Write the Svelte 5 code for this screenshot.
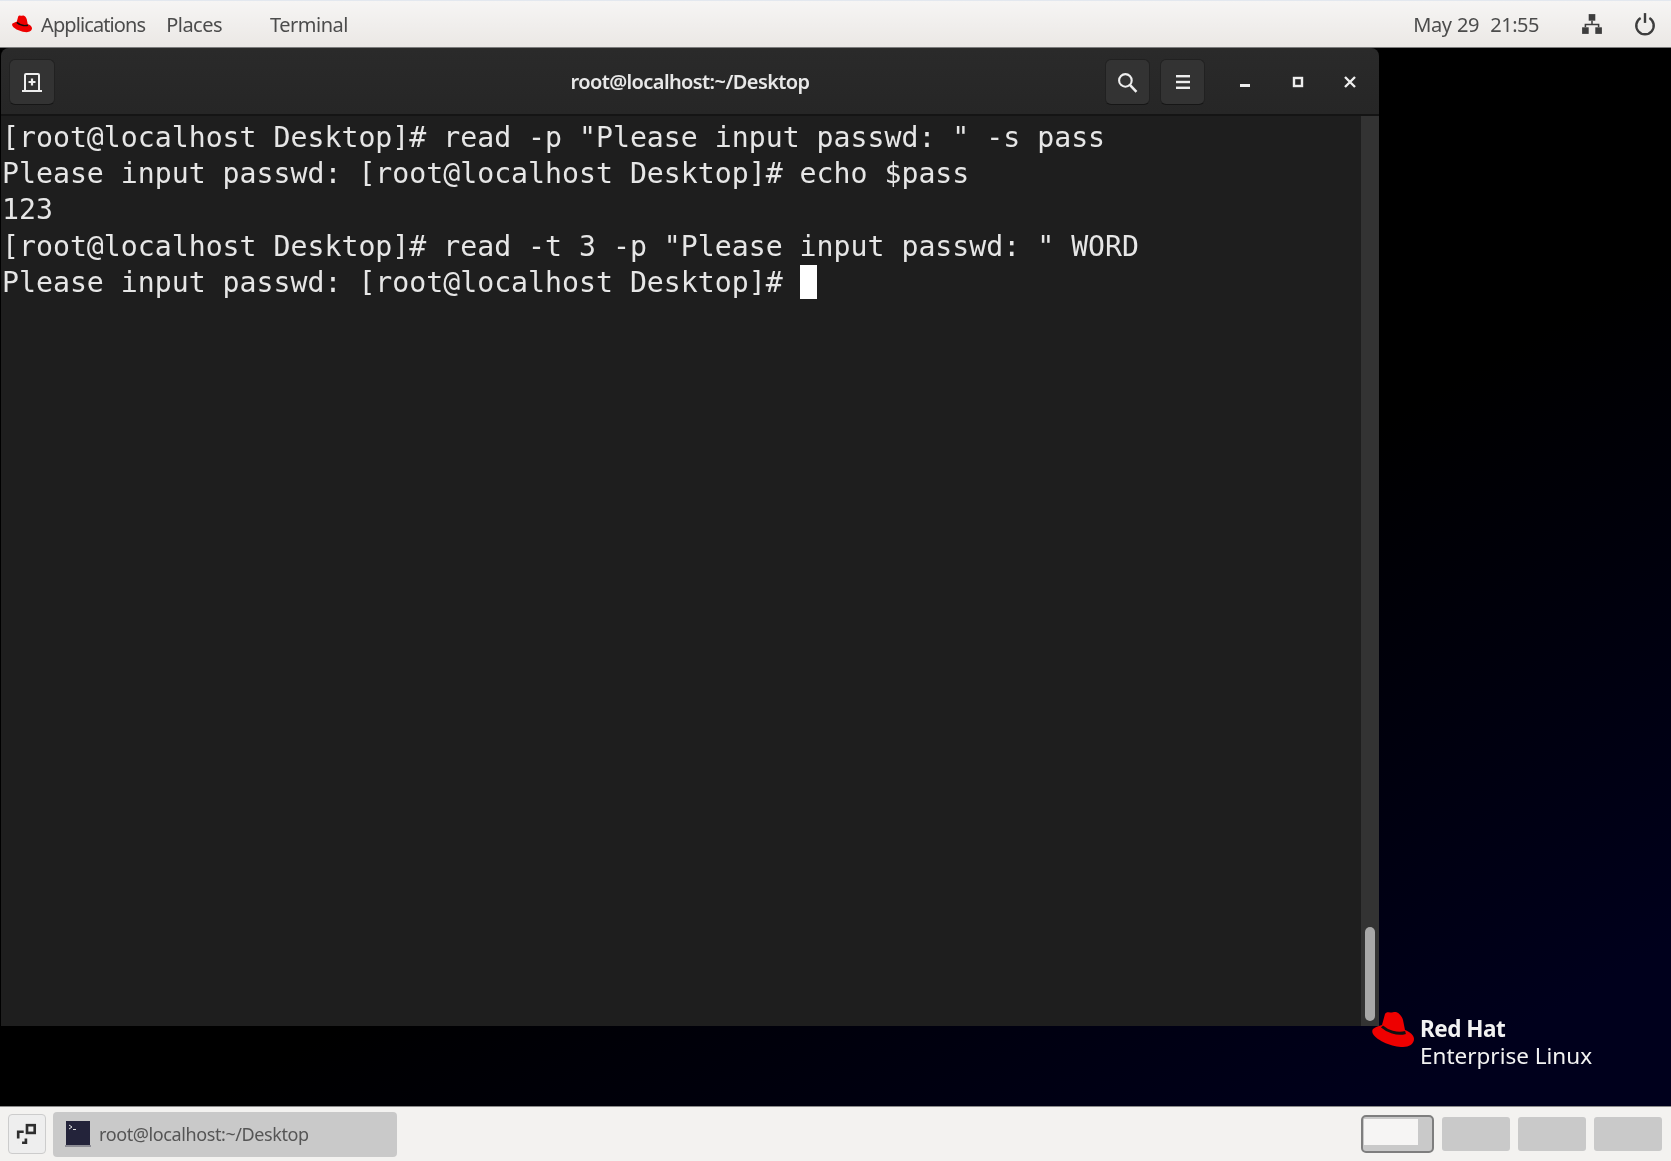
<script>
  const lines = [
    '[root@localhost Desktop]# read -p "Please input passwd: " -s pass',
    'Please input passwd: [root@localhost Desktop]# echo $pass',
    '123',
    '[root@localhost Desktop]# read -t 3 -p "Please input passwd: " WORD'
  ]
  const prompt = 'Please input passwd: [root@localhost Desktop]# '
  const workspaces = [true, false, false, false]
</script>

{#snippet hat(size)}
  <svg width={size} height={size * 36 / 42} viewBox="0 0 42 36" class="hat">
    <path fill="#e00" d="M13 3C14 1 16 1 18 1.500 20 2 22 .5 24 1 27 2 30 5 31 9L33 19C38 21 42 24 42 28 42 33 37 36 31 36 21 36 5 30 1 23 0 21 0 19 1 18 4 15.500 7 15 10 14Z"/>
    <path fill="none" stroke="#111" stroke-width="3" d="M10 15.500C15 20 25 24 33.500 21.500"/>
  </svg>
{/snippet}

<div class="screen">
  <header class="topbar">
    <div class="menus">
      <span class="apps">{@render hat(20)} <span class="apps-label">Applications</span></span>
      <span class="places">Places</span>
      <span class="app-name">Terminal</span>
    </div>
    <div class="status">
      <span class="clock">May 29&nbsp; 21:55</span>
      <svg class="net" width="22" height="22" viewBox="0 0 20 20" fill="#3d3d3d">
        <rect x="7" y="1" width="6" height="6"/>
        <rect x="1" y="13" width="6" height="6"/>
        <rect x="13" y="13" width="6" height="6"/>
        <path d="M9.300 7h1.400v2.800H16.700V13h-1.400v-1.800H4.700V13H3.300V9.800h6z"/>
      </svg>
      <svg class="power" width="22" height="24" viewBox="0 0 20 22" fill="none" stroke="#3d3d3d" stroke-width="2.200">
        <path d="M6 5.500a8 8 0 1 0 8 0"/>
        <path d="M10 1v9"/>
      </svg>
    </div>
  </header>

  <main class="desktop">
    <section class="window">
      <div class="titlebar">
        <button class="btn new-tab" aria-label="New tab">
          <svg width="22" height="22" viewBox="0 0 22 22" fill="none" stroke="#eee" stroke-width="2">
            <path d="M4 19V4a1 1 0 0 1 1-1h12a1 1 0 0 1 1 1v15"/>
            <path d="M1 20h20"/>
            <path d="M11 7.500v7M7.500 11h7" stroke-width="2.200"/>
          </svg>
        </button>
        <span class="title">root@localhost:~/Desktop</span>
        <div class="actions">
          <button class="btn search" aria-label="Search">
            <svg width="21" height="21" viewBox="0 0 20 20" fill="none" stroke="#eee" stroke-width="2">
              <circle cx="8" cy="8" r="6"/>
              <path d="M12.500 12.500 18.500 19" stroke-width="2.400"/>
            </svg>
          </button>
          <button class="btn menu" aria-label="Menu">
            <svg width="14" height="16" viewBox="0 0 14 16" fill="#eee">
              <rect y="1" width="14" height="2.400"/>
              <rect y="6.800" width="14" height="2.400"/>
              <rect y="12.600" width="14" height="2.400"/>
            </svg>
          </button>
          <div class="win-controls">
            <svg width="12" height="12" viewBox="0 0 12 12" fill="#eee"><rect x="1" y="8" width="10" height="3"/></svg>
            <svg width="12" height="12" viewBox="0 0 12 12" fill="none" stroke="#eee" stroke-width="2.400"><rect x="2" y="2" width="8" height="8"/></svg>
            <svg width="12" height="12" viewBox="0 0 12 12" fill="none" stroke="#eee" stroke-width="2.400"><path d="M1 1l10 10M11 1 1 11"/></svg>
          </div>
        </div>
      </div>
      <div class="terminal">
        <pre class="output">{#each lines as line}{line}{'\n'}{/each}{prompt}<span class="cursor"> </span></pre>
        <div class="scrollbar"><div class="thumb"></div></div>
      </div>
    </section>

    <div class="brand">
      {@render hat(42)}
      <div class="brand-text">
        <strong>Red Hat</strong>
        <span>Enterprise Linux</span>
      </div>
    </div>
  </main>

  <footer class="taskbar">
    <button class="show-desktop" aria-label="Show desktop">
      <svg width="22" height="22" viewBox="0 0 20 20" fill="none" stroke="#2e2e2e" stroke-width="2.400">
        <rect x="10" y="2" width="7" height="7"/>
        <path d="M7 8H2v6M2 18h-.01M5.500 18H9v-4"/>
      </svg>
    </button>
    <div class="task">
      <svg width="26" height="28" viewBox="0 0 26 28">
        <rect x="1" y="1" width="24" height="24" fill="#23233a"/>
        <rect x="0" y="25" width="26" height="2" fill="#8c8c94"/>
        <path d="M4 5l3 2-3 2" fill="none" stroke="#ddd" stroke-width="1"/>
        <rect x="8" y="9" width="3" height="1" fill="#ddd"/>
      </svg>
      <span>root@localhost:~/Desktop</span>
    </div>
    <div class="workspaces">
      {#each workspaces as active}
        <div class="workspace" class:active>
          {#if active}<div class="mini-window"></div>{/if}
        </div>
      {/each}
    </div>
  </footer>
</div>

<style>
  :global(body) {
    margin: 0;
    background: #000;
  }

  .screen {
    width: 1671px;
    height: 1161px;
    display: flex;
    flex-direction: column;
    overflow: hidden;
    filter: blur(0.4px);
  }

  .topbar {
    height: 48px;
    flex: none;
    box-sizing: border-box;
    border-top: 1px solid #e3e8ef;
    border-bottom: 1px solid #7c7c7c;
    background: linear-gradient(#f6f5f4, #ebe8e5);
    display: flex;
    justify-content: space-between;
    align-items: center;
    font: 20px "Noto Sans", sans-serif;
    color: #4c4c4c;
    letter-spacing: -0.5px;
  }

  .menus {
    display: flex;
    align-items: center;
  }

  .apps {
    display: flex;
    align-items: center;
    gap: 9px;
    margin-left: 12px;
  }

  .apps-label {
    letter-spacing: -0.9px;
  }

  .places {
    margin-left: 21px;
  }

  .app-name {
    margin-left: 48px;
  }

  .status {
    display: flex;
    align-items: center;
  }

  .clock {
    margin-right: 42px;
    word-spacing: 1px;
  }

  .net {
    margin-right: 31px;
  }

  .power {
    margin-right: 15px;
  }

  .desktop {
    flex: 1;
    position: relative;
    background: linear-gradient(150deg, #000 58%, #00001c 92%);
  }

  .window {
    width: 1378px;
    height: 978px;
    margin-left: 1px;
    display: flex;
    flex-direction: column;
    border-radius: 8px 8px 0 0;
    overflow: hidden;
  }

  .titlebar {
    height: 68px;
    flex: none;
    box-sizing: border-box;
    background: linear-gradient(#2a2a2a, #262626);
    border-bottom: 2px solid #141414;
    display: flex;
    align-items: center;
    justify-content: space-between;
    position: relative;
    padding: 2px 0 0 8px;
  }

  .title {
    position: absolute;
    left: 0;
    right: 0;
    top: 20px;
    text-align: center;
    color: #e8e8e8;
    font: 600 20px "Noto Sans", sans-serif;
    letter-spacing: -0.6px;
    pointer-events: none;
  }

  .actions {
    display: flex;
    align-items: center;
    gap: 10px;
  }

  .btn {
    height: 46px;
    box-sizing: border-box;
    padding: 0;
    display: flex;
    align-items: center;
    justify-content: center;
    border: 1px solid #212121;
    border-bottom-color: #161616;
    border-radius: 6px;
    background: #333;
  }

  .new-tab {
    width: 46px;
  }

  .search,
  .menu {
    width: 45px;
  }

  .win-controls {
    width: 164px;
    padding: 0 23px 0 24px;
    box-sizing: border-box;
    display: flex;
    justify-content: space-between;
    align-items: center;
  }

  .terminal {
    flex: 1;
    min-height: 0;
    display: flex;
    background: #1e1e1e;
  }

  .output {
    flex: 1;
    margin: 0;
    padding: 4px 0 0 1px;
    color: #e6e6e6;
    font: 28.2px/36.2px "DejaVu Sans Mono", monospace;
  }

  .cursor {
    display: inline-block;
    background: #fff;
    width: 17px;
    height: 34px;
    vertical-align: top;
  }

  .scrollbar {
    width: 18px;
    flex: none;
    background: #333;
    display: flex;
    flex-direction: column;
    justify-content: flex-end;
    align-items: center;
    padding-bottom: 5px;
    box-sizing: border-box;
  }

  .thumb {
    width: 10px;
    height: 94px;
    border-radius: 5px;
    background: #a8a8a8;
  }

  .brand {
    position: absolute;
    left: 1372px;
    top: 963px;
    display: flex;
    gap: 6px;
    color: #f2f2f2;
  }

  .brand-text {
    display: flex;
    flex-direction: column;
    font-family: "Noto Sans", sans-serif;
    font-size: 22.5px;
    line-height: 27px;
    margin-top: 4px;
  }

  .brand-text strong {
    letter-spacing: -0.5px;
  }

  .taskbar {
    height: 55px;
    flex: none;
    box-sizing: border-box;
    border-top: 1px solid #8a8a8a;
    background: #f3f2f0;
    display: flex;
    align-items: center;
    padding: 0 9px 0 8px;
    font: 18px "Noto Sans", sans-serif;
    letter-spacing: -0.4px;
    color: #555;
  }

  .show-desktop {
    width: 38px;
    height: 40px;
    box-sizing: border-box;
    padding: 0;
    display: flex;
    align-items: center;
    justify-content: center;
    border: 1px solid #ccc;
    border-radius: 4px;
    background: #eee;
  }

  .task {
    width: 344px;
    height: 45px;
    box-sizing: border-box;
    margin-left: 7px;
    padding-left: 12px;
    display: flex;
    align-items: center;
    gap: 8px;
    background: #c9c9c9;
    border-radius: 4px;
  }

  .workspaces {
    margin-left: auto;
    display: flex;
    align-items: center;
    gap: 8px;
  }

  .workspace {
    width: 68px;
    height: 34px;
    background: #c9c9c9;
    border-radius: 3px;
  }

  .workspace.active {
    width: 73px;
    height: 38px;
    box-sizing: border-box;
    border: 2px solid #7e7e7e;
    border-radius: 5px;
    padding: 2px 1px;
  }

  .mini-window {
    width: 54px;
    height: 26px;
    background: #f6f5f4;
  }
</style>
